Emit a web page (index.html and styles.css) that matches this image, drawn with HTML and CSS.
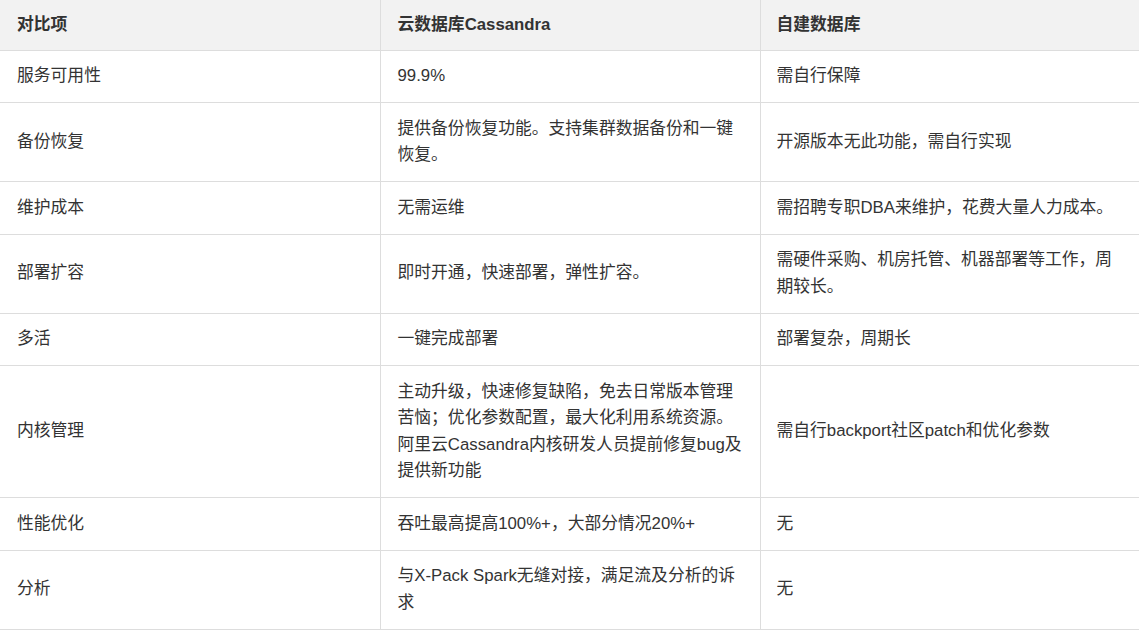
FILE: index.html
```html
<!DOCTYPE html>
<html lang="zh-CN">
<head>
<meta charset="utf-8">
<title>对比</title>
<link rel="stylesheet" href="styles.css">
</head>
<body>
<table class="cmp">
  <colgroup>
    <col class="c1"><col class="c2"><col class="c3">
  </colgroup>
  <thead>
    <tr><th>对比项</th><th>云数据库Cassandra</th><th>自建数据库</th></tr>
  </thead>
  <tbody>
    <tr><td>服务可用性</td><td>99.9%</td><td>需自行保障</td></tr>
    <tr><td>备份恢复</td><td>提供备份恢复功能。支持集群数据备份和一键恢复。</td><td>开源版本无此功能，需自行实现</td></tr>
    <tr><td>维护成本</td><td>无需运维</td><td>需招聘专职DBA来维护，花费大量人力成本。</td></tr>
    <tr><td>部署扩容</td><td>即时开通，快速部署，弹性扩容。</td><td>需硬件采购、机房托管、机器部署等工作，周期较长。</td></tr>
    <tr><td>多活</td><td>一键完成部署</td><td>部署复杂，周期长</td></tr>
    <tr><td>内核管理</td><td>主动升级，快速修复缺陷，免去日常版本管理苦恼；优化参数配置，最大化利用系统资源。阿里云Cassandra内核研发人员提前修复bug及提供新功能</td><td>需自行backport社区patch和优化参数</td></tr>
    <tr><td>性能优化</td><td>吞吐最高提高100%+，大部分情况20%+</td><td>无</td></tr>
    <tr><td>分析</td><td>与X-Pack Spark无缝对接，满足流及分析的诉求</td><td>无</td></tr>
  </tbody>
</table>
</body>
</html>
```
FILE: styles.css
```css
html, body {
  margin: 0;
  padding: 0;
  background: #fff;
}
body {
  font-family: "Liberation Sans", "Noto Sans CJK SC", sans-serif;
  font-size: 16.8px;
  line-height: 26.5px;
  color: #333;
}
.cmp {
  width: 1139px;
  border-collapse: collapse;
  table-layout: fixed;
}
.c1 { width: 380px; }
.c2 { width: 380px; }
.c3 { width: 379px; }
.cmp th,
.cmp td {
  border: 1px solid #ddd;
  padding: 12.5px 17px;
  text-align: left;
  vertical-align: middle;
  word-break: break-all;
}
.cmp th:nth-child(3),
.cmp td:nth-child(3) { padding-left: 16px; }
.cmp th {
  background: #f2f2f2;
  font-weight: bold;
  padding-top: 11.5px;
  padding-bottom: 11.5px;
  border-top: none;
}
.cmp th:first-child,
.cmp td:first-child { border-left: none; }
.cmp th:last-child,
.cmp td:last-child { border-right: none; }
```
